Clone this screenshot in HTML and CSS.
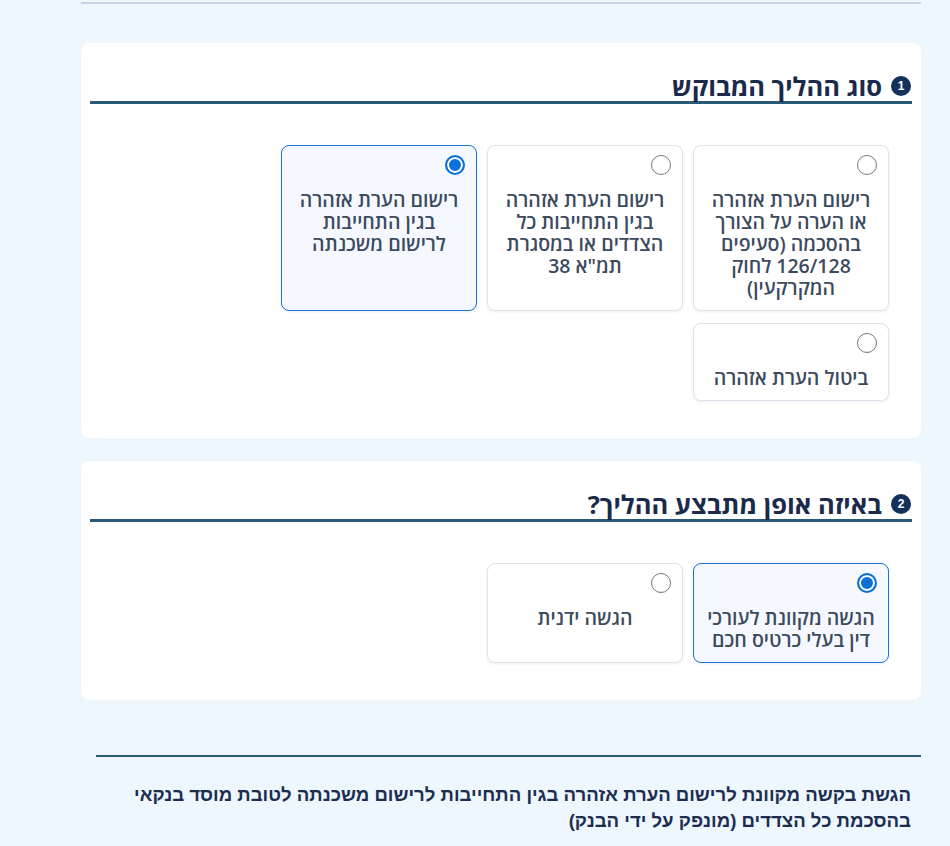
FILE: index.html
```html
<!DOCTYPE html>
<html lang="he" dir="rtl">
<head>
<meta charset="utf-8">
<title>הגשת בקשה</title>
<link rel="stylesheet" href="styles.css">
</head>
<body>
<div class="page">
  <div class="topline"></div>

  <section class="card">
    <h2 class="heading"><span class="badge">1</span><span>סוג ההליך המבוקש</span></h2>
    <div class="options three">
      <label class="option"><input type="radio" name="type" class="radio"><span class="opt-text">רישום הערת אזהרה או הערה על הצורך בהסכמה (סעיפים 126/128 לחוק המקרקעין)</span></label>
      <label class="option"><input type="radio" name="type" class="radio"><span class="opt-text">רישום הערת אזהרה בגין התחייבות כל הצדדים או במסגרת תמ"א 38</span></label>
      <label class="option selected"><input type="radio" name="type" class="radio" checked><span class="opt-text">רישום הערת אזהרה בגין התחייבות לרישום משכנתה</span></label>
      <label class="option"><input type="radio" name="type" class="radio"><span class="opt-text">ביטול הערת אזהרה</span></label>
    </div>
  </section>

  <section class="card">
    <h2 class="heading"><span class="badge">2</span><span>באיזה אופן מתבצע ההליך?</span></h2>
    <div class="options three">
      <label class="option selected"><input type="radio" name="mode" class="radio" checked><span class="opt-text">הגשה מקוונת לעורכי דין בעלי כרטיס חכם</span></label>
      <label class="option"><input type="radio" name="mode" class="radio"><span class="opt-text">הגשה ידנית</span></label>
    </div>
  </section>

  <div class="summary">
    <p class="summary-text">הגשת בקשה מקוונת לרישום הערת אזהרה בגין התחייבות לרישום משכנתה לטובת מוסד בנקאי בהסכמת כל הצדדים (מונפק על ידי הבנק)</p>
  </div>
</div>
</body>
</html>
```

FILE: styles.css
```css
html, body {
  margin: 0;
  padding: 0;
}
body {
  background: #eef6fe;
  font-family: "Liberation Sans", Arial, sans-serif;
  color: #1b2b4a;
}
.page {
  margin: 0 29px 0 81px;
  padding-top: 2px;
}
.topline {
  height: 2px;
  background: #c5d5e5;
}
.card {
  background: #ffffff;
  border-radius: 8px;
  margin-top: 39px;
  padding: 28px 9px 37px 9px;
}
.card + .card {
  margin-top: 23px;
}
.heading {
  display: flex;
  align-items: center;
  gap: 9px;
  margin: 0;
  padding: 0 1px 0 0;
  font-family: "Open Sans", "Liberation Sans", sans-serif;
  font-size: 25.5px;
  line-height: 30px;
  font-weight: 700;
  color: #1b2a4a;
  border-bottom: 3px solid #2a5878;
}
.badge {
  width: 20px;
  height: 20px;
  border-radius: 50%;
  background: #14305c;
  color: #fff;
  font-family: "Liberation Sans", sans-serif;
  font-size: 12px;
  line-height: 20px;
  text-align: center;
  font-weight: bold;
  flex: none;
}
.options {
  display: grid;
  grid-template-columns: repeat(3, 196px);
  column-gap: 10px;
  row-gap: 12px;
  padding: 0 23px;
  margin-top: 41px;
}
.option {
  display: flex;
  flex-direction: column;
  align-items: stretch;
  background: #fff;
  border: 1px solid #dfe4ea;
  border-radius: 8px;
  box-shadow: 0 1px 3px rgba(20, 40, 80, 0.08);
  padding: 9px 11px 11px 11px;
  cursor: pointer;
}
.option.selected {
  border-color: #1a73d9;
  background: #f5f9ff;
}
.radio {
  appearance: none;
  -webkit-appearance: none;
  margin: 0;
  width: 20px;
  height: 20px;
  border-radius: 50%;
  border: 1px solid #777;
  background: #fff;
  align-self: flex-start;
}
.radio:checked {
  border: 2px solid #0b70d8;
  background: #0b70d8;
  box-shadow: inset 0 0 0 2px #fff;
}
.opt-text {
  display: block;
  margin-top: 14px;
  text-align: center;
  font-family: "Open Sans", "Liberation Sans", sans-serif;
  font-size: 19.5px;
  line-height: 22px;
  font-weight: 600;
  color: #3c4a5e;
}
.summary {
  margin: 55px 0 0 15px;
  border-top: 2px solid #2a5878;
  padding: 25px 10px 20px 10px;
}
.summary-text {
  margin: 0;
  font-size: 18.6px;
  line-height: 26px;
  font-weight: bold;
  color: #1c2d50;
}
```
